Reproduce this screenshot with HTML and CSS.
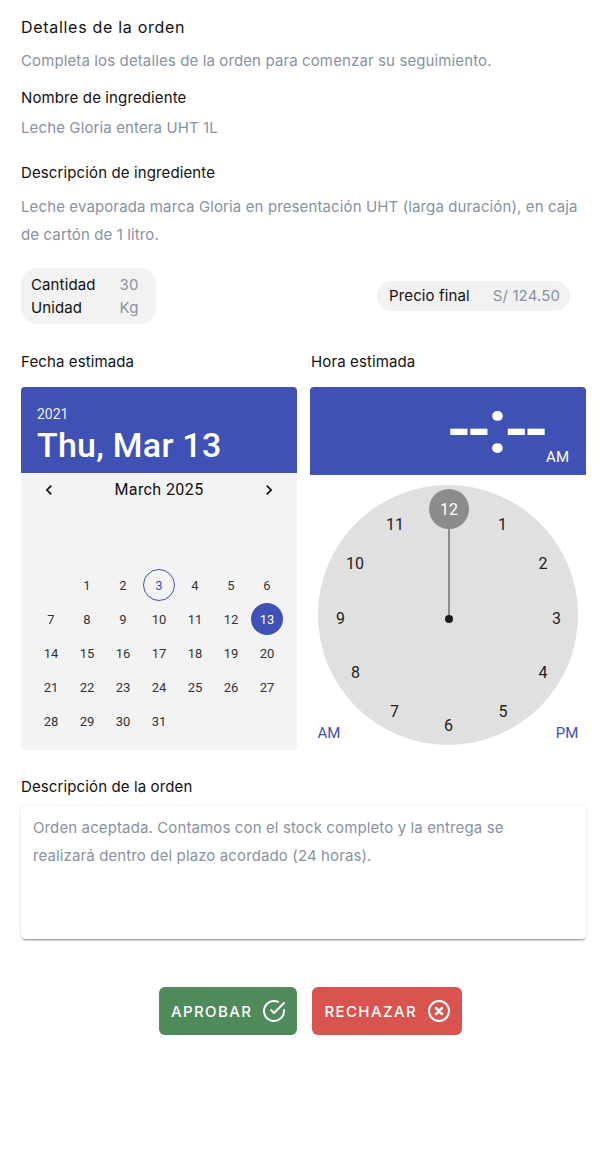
FILE: index.html

```html
<!DOCTYPE html>
<html lang="es">
<head>
  <meta charset="UTF-8" />
  <title>Detalles de la orden</title>
  <link rel="stylesheet" href="styles.css">
</head>
<body>

  <h2 class="titulo">Detalles de la orden</h2>
  <p class="subtitulo">Completa los detalles de la orden para comenzar su seguimiento.</p>

  <div class="etiqueta etiqueta-nombre">Nombre de ingrediente</div>
  <p class="valor valor-nombre">Leche Gloria entera UHT 1L</p>

  <div class="etiqueta etiqueta-desc">Descripción de ingrediente</div>
  <p class="valor valor-desc">Leche evaporada marca Gloria en presentación UHT (larga duración), en caja de cartón de 1 litro.</p>

  <div class="resumen">
    <div class="pill-cantidad">
      <span>Cantidad</span><span class="gris">30</span>
      <span>Unidad</span><span class="gris">Kg</span>
    </div>
    <div class="pill-precio">
      <span>Precio final</span><span class="gris">S/ 124.50</span>
    </div>
  </div>

  <div class="pickers">
    <div class="picker">
      <div class="etiqueta">Fecha estimada</div>
      <div class="calendario">
        <div class="cal-header">
          <div class="cal-anio">2021</div>
          <div class="cal-fecha">Thu, Mar 13</div>
        </div>
        <div class="cal-mes">
          <svg class="flecha" viewBox="0 0 24 24"><path d="M15.41 16.59L10.83 12l4.58-4.59L14 6l-6 6 6 6 1.41-1.41z"/></svg>
          <span>March 2025</span>
          <svg class="flecha" viewBox="0 0 24 24"><path d="M8.59 16.59L13.17 12 8.59 7.41 10 6l6 6-6 6-1.41-1.41z"/></svg>
        </div>
        <div class="cal-dias">
          <span></span><span>1</span><span>2</span><span class="hoy">3</span><span>4</span><span>5</span><span>6</span>
          <span>7</span><span>8</span><span>9</span><span>10</span><span>11</span><span>12</span><span class="elegido">13</span>
          <span>14</span><span>15</span><span>16</span><span>17</span><span>18</span><span>19</span><span>20</span>
          <span>21</span><span>22</span><span>23</span><span>24</span><span>25</span><span>26</span><span>27</span>
          <span>28</span><span>29</span><span>30</span><span>31</span>
        </div>
      </div>
    </div>

    <div class="picker picker-hora">
      <div class="etiqueta">Hora estimada</div>
      <div class="hora-header">
        <div class="hora-digitos">--<span class="dos-puntos">:</span>--</div>
        <div class="hora-ampm">AM</div>
      </div>
      <svg class="reloj" viewBox="0 0 276 280">
        <circle cx="138" cy="140" r="130" fill="#e0e0e0"/>
        <line x1="139" y1="50" x2="139" y2="144" stroke="#8c8c8c" stroke-width="2"/>
        <circle cx="139" cy="144" r="4" fill="#1a1a1a"/>
        <circle cx="139" cy="34" r="20" fill="#8c8c8c"/>
        <text class="num num-activo" x="139" y="34">12</text>
        <text class="num" x="192.5" y="49">1</text>
        <text class="num" x="233" y="88">2</text>
        <text class="num" x="246.5" y="143">3</text>
        <text class="num" x="233" y="197">4</text>
        <text class="num" x="193" y="236">5</text>
        <text class="num" x="138.5" y="250">6</text>
        <text class="num" x="84.5" y="236">7</text>
        <text class="num" x="45.5" y="197">8</text>
        <text class="num" x="30.5" y="143">9</text>
        <text class="num" x="45" y="88">10</text>
        <text class="num" x="85" y="49">11</text>
        <text class="num num-azul" x="19" y="258">AM</text>
        <text class="num num-azul" x="257" y="258">PM</text>
      </svg>
    </div>
  </div>

  <div class="etiqueta etiqueta-orden">Descripción de la orden</div>
  <div class="caja-orden">Orden aceptada. Contamos con el stock completo y la entrega se realizará dentro del plazo acordado (24 horas).</div>

  <div class="acciones">
    <button class="btn btn-aprobar">APROBAR
      <svg class="btn-icono" viewBox="0 0 24 24"><path d="M22 11.08V12a10 10 0 1 1-5.93-9.14"/><path d="M22 4L12 14.01l-3-3"/></svg>
    </button>
    <button class="btn btn-rechazar">RECHAZAR
      <svg class="btn-icono" viewBox="0 0 24 24"><circle cx="12" cy="12" r="10"/><path class="equis" d="M15 9l-6 6M9 9l6 6"/></svg>
    </button>
  </div>

</body>
</html>
```

FILE: styles.css

```css
body {
  margin: 0;
  padding: 17px 22px 0 21px;
  background-color: #fff;
  color: #111;
  font-family: Inter, Arial, sans-serif;
  font-size: 15px;
  letter-spacing: 0.12px;
}
p {
  margin: 0;
}
.titulo {
  margin: 0;
  font-family: Inter, sans-serif;
  font-size: 16px;
  font-weight: 400;
  line-height: 20px;
  letter-spacing: 0.7px;
}
.subtitulo {
  margin-top: 12px;
  line-height: 24px;
  color: #8792a2;
}
.etiqueta {
  line-height: 24px;
}
.etiqueta-nombre {
  margin-top: 13px;
}
.valor {
  line-height: 28px;
  color: #8792a2;
}
.valor-nombre {
  margin-top: 4px;
}
.etiqueta-desc {
  margin-top: 19px;
}
.valor-desc {
  margin-top: 8px;
}
.resumen {
  display: flex;
  align-items: center;
  justify-content: space-between;
  margin-top: 19px;
  padding-right: 16px;
}
.gris {
  color: #8792a2;
}
.pill-cantidad {
  display: grid;
  grid-template-columns: auto auto;
  column-gap: 24px;
  padding: 5px 17px 5px 10px;
  line-height: 23px;
  background-color: #f2f2f2;
  border-radius: 16px;
}
.pill-precio {
  display: flex;
  gap: 23px;
  padding: 0 10px 0 12px;
  line-height: 30px;
  background-color: #f2f2f2;
  border-radius: 15px;
}
.pickers {
  display: grid;
  grid-template-columns: 276px 276px;
  column-gap: 13px;
  margin-top: 26px;
}
.picker .etiqueta {
  margin-bottom: 13px;
}
.picker-hora .etiqueta {
  padding-left: 1px;
}
.calendario {
  background-color: #f3f3f3;
  border-radius: 4px;
  overflow: hidden;
  font-family: Roboto, sans-serif;
  letter-spacing: 0;
}
.cal-header {
  height: 86px;
  box-sizing: border-box;
  padding: 18px 16px 0;
  background-color: #3f51b5;
  color: #fff;
}
.cal-anio {
  font-size: 14px;
  line-height: 18px;
  opacity: 0.9;
}
.cal-fecha {
  font-size: 34px;
  font-weight: 500;
  line-height: 44px;
  letter-spacing: 0.25px;
}
.cal-mes {
  display: flex;
  align-items: center;
  justify-content: space-between;
  height: 33px;
  padding: 0 18px;
  font-size: 16px;
  letter-spacing: 0.4px;
}
.flecha {
  width: 20px;
  height: 20px;
  fill: #111;
}
.cal-dias {
  display: grid;
  grid-template-columns: repeat(7, 36px);
  grid-auto-rows: 32px;
  row-gap: 2px;
  padding: 63px 12px 13px;
  font-size: 13px;
  color: #333;
}
.cal-dias span {
  display: flex;
  align-items: center;
  justify-content: center;
  width: 32px;
  height: 32px;
  margin: 0 2px;
  box-sizing: border-box;
  border-radius: 50%;
}
.cal-dias .hoy {
  border: 1px solid #3f51b5;
  color: #3f51b5;
}
.cal-dias .elegido {
  background-color: #3f51b5;
  color: #fff;
}
.hora-header {
  display: flex;
  height: 88px;
  box-sizing: border-box;
  align-items: flex-end;
  justify-content: flex-end;
  padding: 0 17px 9px 0;
  position: relative;
  background-color: #3f51b5;
  border-radius: 4px 4px 0 0;
  color: #fff;
  font-family: Roboto, sans-serif;
  letter-spacing: 0;
}
.hora-digitos {
  position: absolute;
  right: 41px;
  top: 0;
  font-size: 66px;
  font-weight: 500;
  line-height: 86px;
  letter-spacing: -2.5px;
}
.dos-puntos {
  font-size: 76px;
  line-height: 0;
}
.hora-ampm {
  font-size: 15px;
  line-height: 18px;
}
.reloj {
  display: block;
  width: 276px;
  height: 280px;
}
.num {
  font-family: Roboto, sans-serif;
  font-size: 16px;
  fill: #222;
  letter-spacing: 0;
  text-anchor: middle;
  dominant-baseline: central;
}
.num-activo {
  fill: #fff;
}
.num-azul {
  font-size: 15px;
  fill: #3f51b5;
}
.etiqueta-orden {
  margin-top: 20px;
}
.caja-orden {
  height: 133px;
  box-sizing: border-box;
  margin-top: 7px;
  padding: 8px 70px 8px 12px;
  line-height: 28px;
  color: #8792a2;
  background-color: #fff;
  border-radius: 4px;
  box-shadow: 0 2px 2px -1px rgba(0, 0, 0, 0.45), 0 0 3px rgba(0, 0, 0, 0.12);
}
.acciones {
  display: flex;
  justify-content: center;
  gap: 15px;
  margin-top: 48px;
  padding-left: 14px;
}
.btn {
  display: flex;
  align-items: center;
  gap: 10px;
  height: 48px;
  padding: 0 11px 0 12px;
  border: none;
  border-radius: 6px;
  color: #fff;
  font-family: Inter, sans-serif;
  font-size: 15px;
  font-weight: 500;
  letter-spacing: 1.4px;
  cursor: pointer;
}
.btn-aprobar {
  background-color: #4f8a5b;
}
.btn-rechazar {
  background-color: #d9534f;
}
.btn-icono {
  width: 24px;
  height: 24px;
  fill: none;
  stroke: #fff;
  stroke-width: 2;
  stroke-linecap: round;
  stroke-linejoin: round;
}
.equis {
  stroke-width: 2.5;
}
```
